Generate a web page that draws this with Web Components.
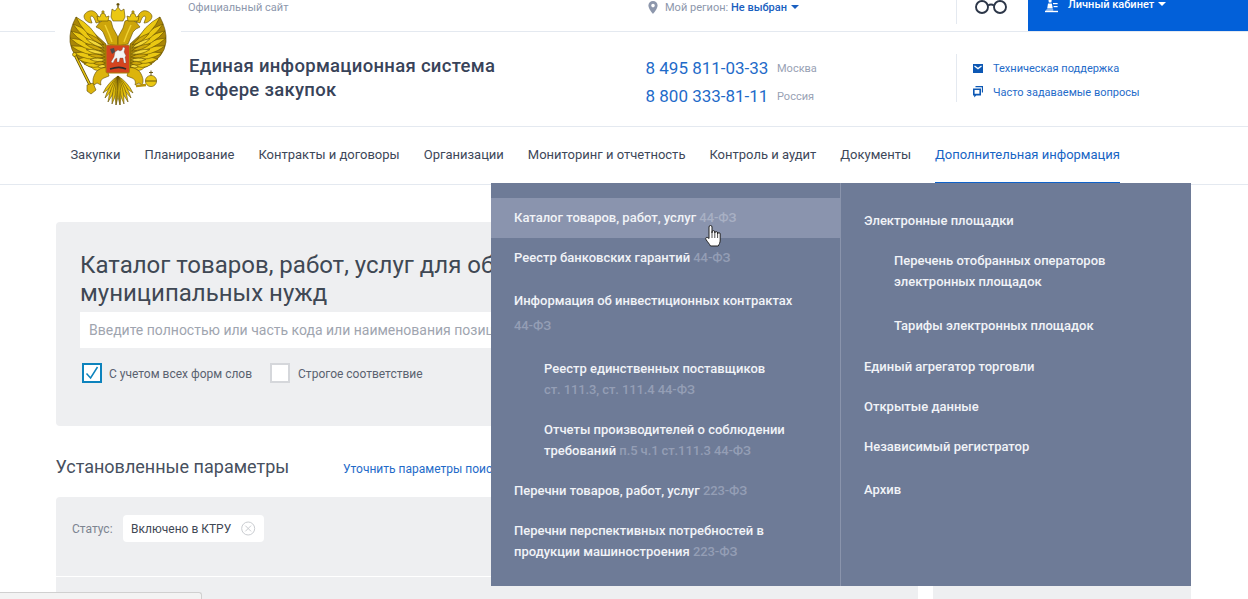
<!DOCTYPE html>
<html lang="ru">
<head>
<meta charset="utf-8">
<title>ЕИС</title>
<style>
	html, body { margin: 0; padding: 0; background: #fff; }
	body { font-family: Roboto, "Liberation Sans", sans-serif; color: #334059; width: 1248px; height: 599px; overflow: hidden; position: relative; }
</style>
</head>
<body>
<gov-topbar></gov-topbar>
<gov-header></gov-header>
<gov-nav></gov-nav>
<gov-main></gov-main>
<gov-menu></gov-menu>
<status-tip></status-tip>

<script>
class GovEmblem extends HTMLElement {
	// one tapered feather from base to tip
	static lens(bx, by, tx, ty, w, fill) {
		const mx = (bx + tx) / 2, my = (by + ty) / 2;
		const dx = tx - bx, dy = ty - by, len = Math.hypot(dx, dy);
		const nx = -dy / len * w, ny = dx / len * w;
		return `<path fill="${fill}" d="M${bx} ${by}Q${(mx + nx).toFixed(1)} ${(my + ny).toFixed(1)} ${tx} ${ty}Q${(mx - nx).toFixed(1)} ${(my - ny).toFixed(1)} ${bx} ${by}Z"/>`;
	}

	static get wing() {
		const tips = [[91,67],[84,64],[78,59],[74,53],[71,46],[70,38],[71,31],[73,24],[76,17]];
		let out = '<path d="M76 17Q69 30 70 42Q72 58 90 67L106 69V44Q92 31 76 17Z" fill="#a98607"/>';
		tips.forEach(([x, y], i) => {
			const bx = 104 - i * .5, by = 68 - i * 3.2;
			out += GovEmblem.lens(bx, by, x, y, 6, '#ebc812');
		});
		tips.slice(0, 8).forEach(([x, y], i) => {
			const bx = 106 - i * .3, by = 66 - i * 3;
			const mx = +(bx + (x - bx) * .55).toFixed(1), my = +(by + (y - by) * .55).toFixed(1);
			out += GovEmblem.lens(bx, by, mx, my, 3.6, i % 2 ? '#cfa70a' : '#f3d838');
		});
		return out;
	}

	static get tail() {
		return [[103,93],[105,98],[108,102],[112,104],[116,105]]
			.map(([x, y]) => GovEmblem.lens(118, 76, x, y, 3.4, '#e6c20e')).join('');
	}

	constructor() {
		super();
		this.attachShadow({ mode: 'open' });
		this.shadowRoot.innerHTML = `
			<style>
				:host { position: absolute; left: 55px; top: -32px; width: 126px; height: 108px; background: #fff; display: block; }
				svg { display: block; position: absolute; left: 0; top: 0; }
			</style>
			<svg width="126" height="108" viewBox="55 0 126 108">
				<defs>
					<g id="half" stroke="#5f4c04" stroke-width=".6" stroke-linejoin="round">
						${GovEmblem.wing}
						${GovEmblem.tail}
						<path d="M84 16c1-4 6-6 9-5 3 1 4 3 5 5l2 6-4 1c-1-3-2-6-4-7-2 0-2 2-1 4l1 3c-4 0-8-3-8-7Z" fill="#e0b90d"/>
						<path d="M96 27l4-5 5-3 6 2 2 7 5 9v9l-10-2-5-12-3-3Z" fill="#cda50a"/>
						<path d="M105 25l4 9 3 8" fill="none" stroke="#f0d232" stroke-width="1.4"/>
						<path d="M98 21l-1-5 3 1 1-3 2-1 2 1 1 3 3-1-1 5Z" fill="#ebc812"/>
						<circle cx="103" cy="12" r="1.2" fill="#ebc812"/>
						<path d="M96 72c4-4 8-5 11-4l2 8-5 2c-3 1-4 4-3 7l-4-2-3 2c-2-4-1-8 2-13Z" fill="#dcb40c"/>
					</g>
				</defs>
				<use href="#half"/>
				<use href="#half" transform="translate(236 0) scale(-1 1)"/>
				<g stroke="#5f4c04" stroke-width=".6">
					<path d="M75 55L92 89" stroke-width="2.8"/>
					<path d="M75 55L92 89" stroke-width="1.4" stroke="#ebc812"/>
					<circle cx="74.5" cy="54.5" r="2" fill="#ebc812"/>
					<path d="M87 85l6-2 3 7-5 4-4-3Z" fill="#dcb40c"/>
					<path d="M136 86l10-1" stroke-width="2.4" stroke="#b89207"/>
					<circle cx="151" cy="81" r="5.6" fill="#ebc812"/>
					<path d="M151 75.5v-5M149 72.5h4M145.5 81h11" fill="none" stroke-width=".9"/>
					<path d="M111 17l1-8 3 2 3-4 3 4 3-2 1 8-2 4h-10Z" fill="#ebc812"/>
					<path d="M118 3v4M116.5 4.5h3" stroke-width="1.3" fill="none"/>
					<path d="M118 76L116 105M118 76L120 105" fill="none"/>
				</g>
				<rect x="106" y="45" width="23.5" height="28" rx="1.5" fill="#d4441f" stroke="#a78308" stroke-width="1"/>
				<path d="M111 62l3-5 1-5 3-2 2 1 2-1 1-3 2 1-1 4 2 4-1 1 1 6-2 0-1-5-3 0-1 4-2 0 0-4-2 1-2 4Z" fill="#f4f4f4" stroke="#555" stroke-width=".3"/>
				<path d="M110 49l4-1 1 4-3 2Z" fill="#4a4a4a"/>
				<path d="M110 69c6-2 12-2 16 0" stroke="#2c2c2c" stroke-width="1.6" fill="none"/>
			</svg>
		`;
	}
}

class GovTopbar extends HTMLElement {
	constructor() {
		super();
		this.attachShadow({ mode: 'open' });
		this.shadowRoot.innerHTML = `
			<style>
				:host { display: flex; height: 31px; border-bottom: 1px solid #e4e9f0; box-sizing: content-box; font-size: 11px; color: #8d97ac; }
				.site { margin-left: 188px; width: 460px; line-height: 16px; height: 16px; }
				.region { display: flex; align-items: center; height: 15px; width: 308px; gap: 7px; }
				.region b { font-weight: 500; color: #1a5fc0; }
				.caret { display: inline-block; width: 0; height: 0; border: 4px solid transparent; border-top-color: currentColor; border-bottom: 0; margin-left: 4px; vertical-align: 2px; }
				.glasses { width: 72px; height: 24px; border-left: 1px solid #e4e9f0; box-sizing: border-box; display: flex; padding-left: 17px; }
				.cabinet { flex: 1; background: #0260d9; color: #fff; font-weight: 500; display: flex; gap: 10px; height: 31px; padding: 0 0 0 17px; align-items: flex-start; line-height: 9px; }
				.cabinet span { font-size: 11px; }
			</style>
			<div class="site">Официальный сайт</div>
			<div class="region">
				<svg width="10" height="13" viewBox="0 0 10 13"><path d="M5 0a4.6 4.6 0 0 0-4.6 4.6C.4 8 5 13 5 13s4.6-5 4.6-8.4A4.6 4.6 0 0 0 5 0Zm0 6.4a1.8 1.8 0 1 1 0-3.6 1.8 1.8 0 0 1 0 3.6Z" fill="#8d97ac"/></svg>
				<span>Мой регион: <b>Не выбран<i class="caret"></i></b></span>
			</div>
			<div class="glasses">
				<svg width="36" height="16" viewBox="0 0 36 16"><g fill="none" stroke="#2c3648" stroke-width="1.9"><circle cx="8" cy="7" r="6"/><circle cx="26" cy="7" r="6"/><path d="M14 5.5q3-2 6 0"/></g></svg>
			</div>
			<div class="cabinet">
				<svg width="13" height="13" viewBox="0 0 13 13" fill="#fff"><path d="M3.5 0h3.2l-.3 2.5H3.800ZM3 3.500h3.800l1 5H2.200ZM1.800 9.500h6.400v1H.4Z"/><rect x="0" y="10.800" width="13" height="1.400"/><rect x="8" y="3" width="4.600" height="1.200"/><rect x="8.600" y="6" width="4" height="1.200"/></svg>
				<span>Личный кабинет<i class="caret"></i></span>
			</div>
		`;
	}
}

class GovHeader extends HTMLElement {
	constructor() {
		super();
		this.attachShadow({ mode: 'open' });
		this.shadowRoot.innerHTML = `
			<style>
				:host { display: flex; height: 94px; border-bottom: 1px solid #e4e9f0; box-sizing: content-box; position: relative; }
				.title { margin: 22px 0 0 189px; width: 456.5px; font-size: 18.5px; font-weight: 500; line-height: 24px; color: #384359; letter-spacing: .3px; }
				.phones { width: 310.5px; margin-top: 26px; display: grid; grid-template-columns: 131.5px auto; align-content: start; row-gap: 7px; font-size: 17px; line-height: 21px; color: #1f6bc9; }
				.phones small { font-size: 11px; color: #98a1b4; }
				.help { border-left: 1px solid #e4e9f0; height: 48px; margin-top: 22px; box-sizing: border-box; padding: 7px 0 0 16px; font-size: 11px; color: #1f6bc9; display: flex; flex-direction: column; gap: 10px; }
				.help div { display: flex; gap: 10px; align-items: center; height: 14px; }
			</style>
			<div class="title">Единая информационная система<br>в сфере закупок</div>
			<div class="phones">
				<span>8 495 811-03-33</span><small>Москва</small>
				<span>8 800 333-81-11</span><small>Россия</small>
			</div>
			<div class="help">
				<div><svg width="10" height="9" viewBox="0 0 10 9"><rect width="10" height="9" fill="#0d58b4"/><path d="M1.5 2L5 4.6 8.5 2" fill="none" stroke="#fff" stroke-width="1.3"/></svg><span>Техническая поддержка</span></div>
				<div><svg width="10" height="12" viewBox="0 0 10 12"><path d="M2.5.6h7v6" fill="none" stroke="#0d58b4" stroke-width="1.3"/><path d="M0 2.6h8v6.8H3.2L1.2 11.6V9.4H0Zm1.6 1.5v3.7h4.8V4.1Z" fill="#0d58b4"/></svg><span>Часто задаваемые вопросы</span></div>
			</div>
			<gov-emblem></gov-emblem>
		`;
	}
}

class GovNav extends HTMLElement {
	constructor() {
		super();
		this.attachShadow({ mode: 'open' });
		const items = ['Закупки', 'Планирование', 'Контракты и договоры', 'Организации', 'Мониторинг и отчетность', 'Контроль и аудит', 'Документы', 'Дополнительная информация'];
		this.shadowRoot.innerHTML = `
			<style>
				:host { display: flex; height: 57px; padding-left: 70.4px; gap: 24px; border-bottom: 1px solid #e4e9f0; font-size: 13px; color: #3d4759; }
				a { line-height: 55px; height: 55px; }
				a.on { color: #1764c4; border-bottom: 2px solid #0e62c9; }
			</style>
			${items.map((t, i) => `<a class="${i === items.length - 1 ? 'on' : ''}">${t}</a>`).join('')}
		`;
	}
}

class FormCheck extends HTMLElement {
	constructor() {
		super();
		this.attachShadow({ mode: 'open' });
		const on = this.hasAttribute('checked');
		this.shadowRoot.innerHTML = `
			<style>
				:host { display: inline-flex; align-items: center; gap: ${on ? 7 : 8}px; font-size: 12px; color: #5a6270; }
				.box { width: 20px; height: 20px; box-sizing: border-box; background: #fff; border: 2px solid ${on ? '#0d83bd' : '#d5d7db'}; }
				.label { padding-top: 1px; }
				svg { display: block; }
			</style>
			<div class="box">${on ? '<svg width="16" height="16" viewBox="0 0 16 16"><path d="M2.5 8.5L6.6 13 13.5 2" fill="none" stroke="#0d83bd" stroke-width="1.5"/></svg>' : ''}</div>
			<div class="label"><slot></slot></div>
		`;
	}
}

class GovMain extends HTMLElement {
	constructor() {
		super();
		this.attachShadow({ mode: 'open' });
		this.shadowRoot.innerHTML = `
			<style>
				:host { display: block; padding: 37px 57px 0 56px; }
				.search { background: #eeeff1; border-radius: 4px; height: 204px; box-sizing: border-box; padding: 29px 24px 0; }
				h2 { margin: 0; font-weight: 400; font-size: 24px; line-height: 28px; color: #3f4854; white-space: nowrap; }
				.input { margin-top: 5px; background: #fff; height: 36px; line-height: 36px; padding: 0 9px; font-size: 14px; color: #a0a5af; white-space: nowrap; }
				.checks { display: flex; margin: 15px 0 0 2px; gap: 18px; }
				.row { display: flex; align-items: baseline; margin-top: 28px; height: 43px; }
				h3 { margin: 0 0 0 -.5px; font-weight: 400; font-size: 18px; line-height: 26px; color: #47505e; width: 287.5px; }
				.row a { font-size: 12px; color: #1f6bc9; }
				.cols { display: flex; gap: 15px; height: 102px; }
				.params { width: 862px; background: #eeeff1; border-radius: 4px 4px 0 0; box-sizing: border-box; }
				.side { width: 258px; background: #eeeff1; }
				.status { display: flex; align-items: center; height: 80px; padding: 0 0 16px 16px; box-sizing: border-box; border-bottom: 1px solid #fff; gap: 10px; font-size: 12px; color: #7c8490; }
				.chip { background: #fff; border-radius: 4px; height: 27px; width: 141px; box-sizing: border-box; padding: 0 8px 0 8.5px; display: flex; align-items: center; gap: 10px; color: #3f4854; font-size: 12px; white-space: nowrap; }
			</style>
			<section class="search">
				<h2>Каталог товаров, работ, услуг для обеспечения государственных и<br>муниципальных нужд</h2>
				<div class="input">Введите полностью или часть кода или наименования позиции</div>
				<div class="checks">
					<form-check checked>С учетом всех форм слов</form-check>
					<form-check>Строгое соответствие</form-check>
				</div>
			</section>
			<div class="row">
				<h3>Установленные параметры</h3>
				<a>Уточнить параметры поиска</a>
			</div>
			<div class="cols">
				<div class="params">
					<div class="status">
						<span>Статус:</span>
						<div class="chip">
							<span>Включено в КТРУ</span>
							<svg width="15" height="15" viewBox="0 0 15 15"><g fill="none" stroke="#c6c9ce"><circle cx="7.5" cy="7.5" r="6.8"/><path d="M4.5 4.5l6 6M10.5 4.5l-6 6"/></g></svg>
						</div>
					</div>
				</div>
				<div class="side"></div>
			</div>
		`;
	}
}

class MenuItem extends HTMLElement {
	constructor() {
		super();
		this.attachShadow({ mode: 'open' });
		this.shadowRoot.innerHTML = `
			<style>
				:host { display: block; padding: 9px 23px 10px; line-height: 21px; color: #f1f3f7; font-size: 13px; font-weight: 500; }
				:host([sub]) { padding-left: 53px; }
				:host([active]) { background: #8a94ae; }
				::slotted(i) { font-style: normal; color: #949eb5; letter-spacing: -.1px; }
				:host([active]) ::slotted(i) { color: #a8b0c4; }
			</style>
			<slot></slot>
		`;
	}
}

class GovMenu extends HTMLElement {
	constructor() {
		super();
		this.attachShadow({ mode: 'open' });
		this.shadowRoot.innerHTML = `
			<style>
				:host { position: absolute; left: 491px; top: 183px; width: 700px; height: 403px; background: #6e7b97; display: flex; z-index: 5; }
				.left { width: 349px; padding-top: 15px; border-right: 1px solid #8a94ac; }
				.right { flex: 1; padding-top: 18px; }
				.hand { position: absolute; left: 213px; top: 41px; }
			</style>
			<div class="left"><slot name="left"></slot></div>
			<div class="right"><slot name="right"></slot></div>
			<svg class="hand" width="18" height="24" viewBox="0 0 18 24"><path d="M5 14V3a1.5 1.5 0 0 1 3 0v6l0-1a1.4 1.4 0 0 1 2.8 0v1a1.4 1.4 0 0 1 2.8 0v1a1.3 1.3 0 0 1 2.6 0v6c0 3-1 4-2 6H6.5c-1-2-3-4-4.5-6.5-1-2 1-3 3-1Z" fill="#fff" stroke="#222" stroke-width="1" stroke-linejoin="round"/><path d="M8 9v5M10.8 9v5M13.6 10v4" stroke="#222" stroke-width=".8"/></svg>
		`;
		this.innerHTML = `
			<menu-item slot="left" active>Каталог товаров, работ, услуг <i>44-ФЗ</i></menu-item>
			<menu-item slot="left">Реестр банковских гарантий <i>44-ФЗ</i></menu-item>
			<menu-item slot="left" style="margin-top:3px">Информация об инвестиционных контрактах<br><i style="display:inline-block;margin-top:4px">44-ФЗ</i></menu-item>
			<menu-item slot="left" sub style="margin-top:3px">Реестр единственных поставщиков<br><i>ст. 111.3, ст. 111.4 44-ФЗ</i></menu-item>
			<menu-item slot="left" sub>Отчеты производителей о соблюдении<br>требований <i>п.5 ч.1 ст.111.3 44-ФЗ</i></menu-item>
			<menu-item slot="left">Перечни товаров, работ, услуг <i>223-ФЗ</i></menu-item>
			<menu-item slot="left">Перечни перспективных потребностей в<br>продукции машиностроения <i>223-ФЗ</i></menu-item>
			<menu-item slot="right">Электронные площадки</menu-item>
			<menu-item slot="right" sub>Перечень отобранных операторов<br>электронных площадок</menu-item>
			<menu-item slot="right" sub style="margin-top:4px">Тарифы электронных площадок</menu-item>
			<menu-item slot="right" style="margin-top:1px">Единый агрегатор торговли</menu-item>
			<menu-item slot="right">Открытые данные</menu-item>
			<menu-item slot="right">Независимый регистратор</menu-item>
			<menu-item slot="right" style="margin-top:3px">Архив</menu-item>
		`;
	}
}

class StatusTip extends HTMLElement {
	constructor() {
		super();
		this.attachShadow({ mode: 'open' });
		this.shadowRoot.innerHTML = `
			<style>
				:host { position: absolute; left: 0; top: 592px; width: 202px; height: 7px; box-sizing: border-box; background: #f3f3f3; border: 1px solid #d0d0d0; border-left: 0; border-bottom: 0; border-top-right-radius: 3px; z-index: 6; }
			</style>
		`;
	}
}

customElements.define('gov-emblem', GovEmblem);
customElements.define('gov-topbar', GovTopbar);
customElements.define('gov-header', GovHeader);
customElements.define('gov-nav', GovNav);
customElements.define('form-check', FormCheck);
customElements.define('gov-main', GovMain);
customElements.define('menu-item', MenuItem);
customElements.define('gov-menu', GovMenu);
customElements.define('status-tip', StatusTip);
</script>
</body>
</html>
